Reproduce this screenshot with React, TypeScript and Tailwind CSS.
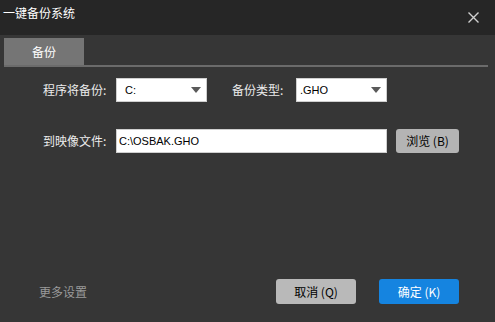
import React from "react";

const cjk = { fontFamily: '"Noto Sans CJK SC", "Noto Sans", sans-serif' };
const latin = { fontFamily: '"Liberation Sans", Arial, sans-serif' };

function Select({ value, textPad }: { value: string; textPad: string }) {
  return (
    <div className="flex h-[24px] w-[91px] items-center justify-between border border-[#cfcfcf] bg-white pr-[5px]">
      <span className={`${textPad} text-[11px] text-black`} style={latin}>
        {value}
      </span>
      <svg width="10" height="6" viewBox="0 0 10 6">
        <polygon points="0,0 10,0 5,6" fill="#5a5a5a" />
      </svg>
    </div>
  );
}

export default function App() {
  return (
    <div className="flex h-[322px] w-[495px] flex-col bg-[#363636] text-[12px] leading-none" style={cjk}>
      <div className="flex h-[35px] items-start justify-between bg-[#262626] pl-[3px] pr-[16px] pt-[7px]">
        <span className="text-white">一键备份系统</span>
        <svg className="mt-[5px]" width="11" height="11" viewBox="0 0 11 11">
          <path d="M0.5 0.5 L10.5 10.5 M10.5 0.5 L0.5 10.5" stroke="#d0d0d0" strokeWidth="1.4" />
        </svg>
      </div>

      <div className="ml-[4px] mr-[7px] mt-[3px]">
        <div className="flex h-[27px] w-[80px] items-center justify-center bg-[#757575] text-white">备份</div>
        <div className="h-[2px] bg-[#6b6b6b]" />
      </div>

      <div className="ml-[43px] mt-[11px] flex items-center">
        <span className="w-[73px] text-[#ececec]">程序将备份:</span>
        <Select value="C:" textPad="pl-[8px]" />
        <span className="ml-[25px] w-[64px] text-[#ececec]">备份类型:</span>
        <Select value=".GHO" textPad="pl-[3px]" />
      </div>

      <div className="ml-[43px] mt-[27px] flex items-center">
        <span className="w-[73px] text-[#ececec]">到映像文件:</span>
        <div className="flex h-[24px] w-[271px] items-center border border-[#cfcfcf] bg-white pl-[2px]">
          <span className="text-[11px] text-black" style={latin}>
            C:\OSBAK.GHO
          </span>
        </div>
        <button className="ml-[9px] flex h-[24px] w-[63px] items-center justify-center rounded-[3px] bg-[#b4b4b4] text-black">
          浏览 (B)
        </button>
      </div>

      <div className="mb-[18px] mt-auto flex items-center pl-[39px] pr-[36px]">
        <span className="text-[#9a9a9a]">更多设置</span>
        <button className="ml-auto flex h-[25px] w-[80px] items-center justify-center rounded-[3px] bg-[#b9b9b9] text-black">
          取消 (Q)
        </button>
        <button className="ml-[23px] flex h-[25px] w-[80px] items-center justify-center rounded-[3px] bg-[#1584e0] text-white">
          确定 (K)
        </button>
      </div>
    </div>
  );
}
